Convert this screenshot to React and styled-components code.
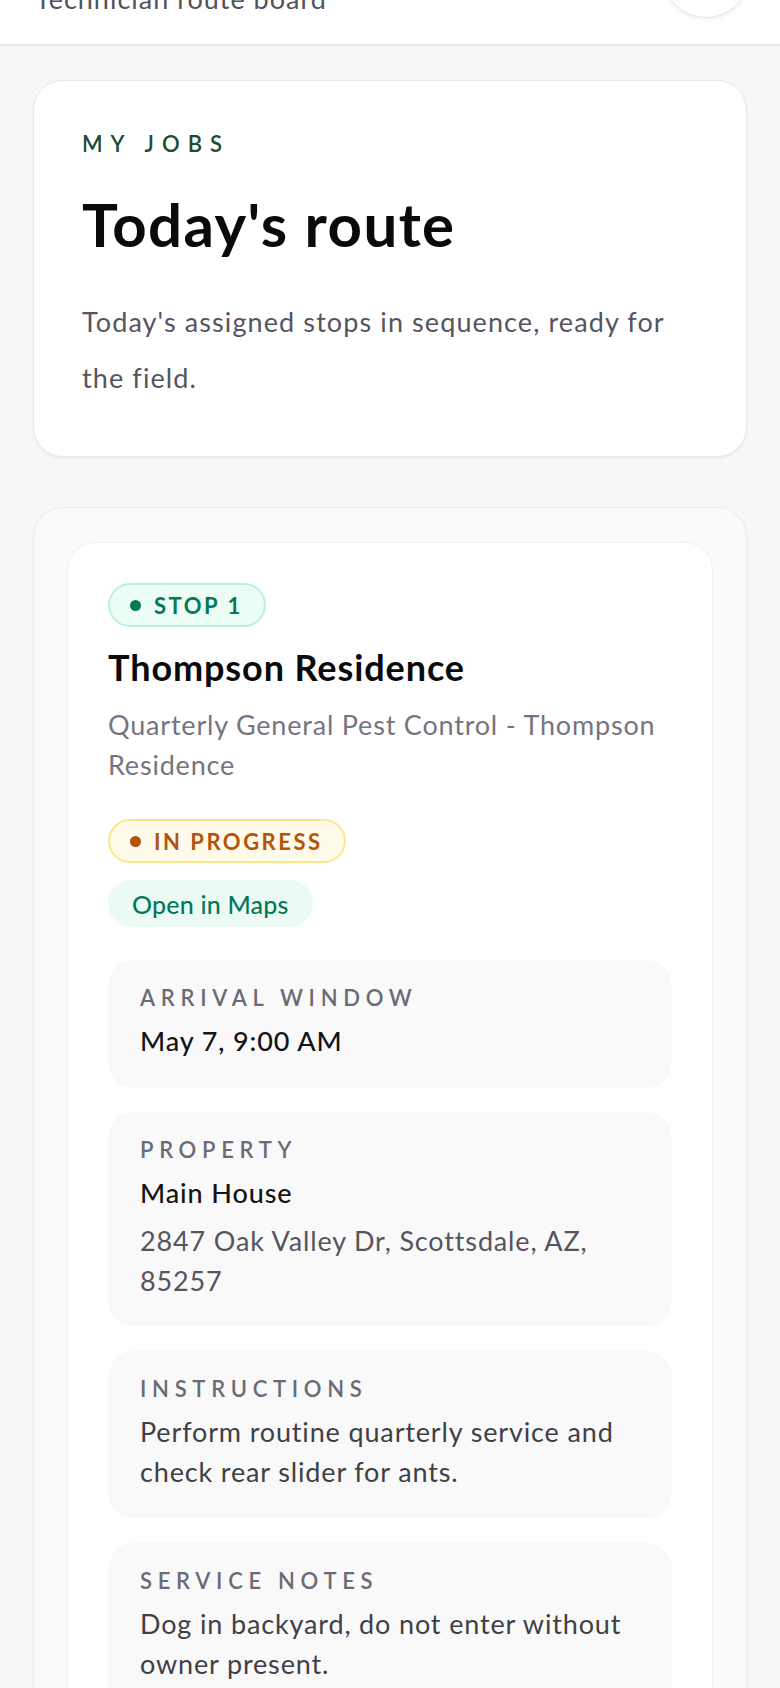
import React from "react";
import styled, { createGlobalStyle } from "styled-components";

const GlobalStyle = createGlobalStyle`
  * { box-sizing: border-box; }
  html, body { margin: 0; padding: 0; }
  body {
    background: #f6f7f9;
    font-family: Lato, "Noto Sans", "Liberation Sans", sans-serif;
    color: #18181b;
    -webkit-font-smoothing: antialiased;
  }
`;

const Page = styled.div`
  min-height: 1688px;
  background: #f6f7f9;
`;

/* the page is photographed scrolled down: the header sits partly above the fold */
const Header = styled.header`
  margin-top: -90px;
  background: #ffffff;
  border-bottom: 2px solid #e6e7ea;
  padding: 20px 30px 26px 35px;
  display: flex;
  justify-content: space-between;
  align-items: flex-end;
`;

const HeaderSub = styled.p`
  margin: 0 0 4px;
  font-size: 27px;
  line-height: 30px;
  letter-spacing: 1px;
  color: #52525b;
`;

const CircleButton = styled.button`
  width: 88px;
  height: 88px;
  border-radius: 50%;
  border: 1.5px solid #e4e6e8;
  background: #ffffff;
  box-shadow: 0 2px 4px rgba(0, 0, 0, 0.06);
  padding: 0;
`;

const Main = styled.main`
  padding: 34px 33px 40px;
  display: flex;
  flex-direction: column;
  gap: 50px;
`;

const HeroCard = styled.section`
  background: #ffffff;
  border: 1px solid #e8e9ec;
  border-radius: 30px;
  padding: 50px 48px 50px;
  box-shadow: 0 2px 3px rgba(0, 0, 0, 0.05);
`;

const Eyebrow = styled.div`
  font-size: 22px;
  line-height: 26px;
  font-weight: 600;
  letter-spacing: 8px;
  color: #1b4d36;
  text-transform: uppercase;
`;

const Title = styled.h1`
  margin: 31px 0 0;
  font-size: 60px;
  line-height: 72px;
  font-weight: 700;
  color: #0a0a0a;
  letter-spacing: 1.4px;
`;

const Lead = styled.p`
  margin: 34px 0 0;
  font-size: 27px;
  line-height: 56px;
  letter-spacing: 1.1px;
  color: #55555f;
`;

const ListShell = styled.section`
  background: #fafafa;
  border: 1px solid #ececee;
  border-radius: 30px;
  padding: 34px 33px;
  box-shadow: 0 2px 3px rgba(0, 0, 0, 0.04);
`;

const StopCard = styled.article`
  background: #ffffff;
  border: 1px solid #efeff1;
  border-radius: 28px;
  padding: 40px;
  display: flex;
  flex-direction: column;
  align-items: flex-start;
`;

const tones = {
  green: { bg: "#ecfdf5", border: "#bdf0d6", fg: "#047857" },
  amber: { bg: "#fffbeb", border: "#fde68a", fg: "#b45309" },
};

const Pill = styled.span`
  display: inline-flex;
  align-items: center;
  gap: 13px;
  height: 44px;
  padding: 0 21px 0 20px;
  border-radius: 999px;
  border: 2px solid ${(p) => tones[p.$tone].border};
  background: ${(p) => tones[p.$tone].bg};
  color: ${(p) => tones[p.$tone].fg};
  font-size: 22px;
  font-weight: 700;
  letter-spacing: 2.5px;
  text-transform: uppercase;
  margin-top: ${(p) => p.$mt || 0}px;
`;

const Dot = styled.span`
  width: 11px;
  height: 11px;
  border-radius: 50%;
  background: currentColor;
  flex: none;
`;

const StopTitle = styled.h2`
  margin: 18px 0 0;
  font-size: 36px;
  line-height: 45px;
  font-weight: 700;
  letter-spacing: 0.9px;
  color: #0a0a0a;
`;

const StopSub = styled.p`
  margin: 15px 0 0;
  font-size: 27px;
  line-height: 40px;
  letter-spacing: 0.8px;
  color: #75757f;
`;

const MapsButton = styled.a`
  display: inline-flex;
  align-items: center;
  height: 47px;
  margin-top: 17px;
  padding: 0 24px;
  border-radius: 999px;
  background: #ebfbf3;
  color: #047857;
  font-size: 25px;
  font-weight: 500;
  letter-spacing: 0.2px;
  text-decoration: none;
`;

const InfoStack = styled.div`
  align-self: stretch;
  margin-top: 33px;
  display: flex;
  flex-direction: column;
  gap: 24px;
`;

const InfoBox = styled.div`
  background: #f9f9fa;
  border-radius: 26px;
  padding: 22px 32px 26.6px;
`;

const InfoLabel = styled.div`
  font-size: 22px;
  line-height: 32px;
  font-weight: 600;
  letter-spacing: 5.7px;
  color: #6b6b76;
  text-transform: uppercase;
`;

const InfoValue = styled.div`
  margin-top: 7px;
  font-size: 27px;
  line-height: 40px;
  font-weight: 500;
  letter-spacing: 0.9px;
  color: #141416;
`;

const InfoText = styled.div`
  margin-top: ${(p) => (p.$after ? 8 : 7)}px;
  font-size: 27px;
  line-height: 40px;
  letter-spacing: 0.85px;
  color: ${(p) => (p.$muted ? "#55555e" : "#3f3f46")};
`;

const stop = {
  n: 1,
  name: "Thompson Residence",
  service: "Quarterly General Pest Control - Thompson Residence",
  status: "In progress",
  arrival: "May 7, 9:00 AM",
  property: "Main House",
  address: "2847 Oak Valley Dr, Scottsdale, AZ, 85257",
  instructions: "Perform routine quarterly service and check rear slider for ants.",
  notes: "Dog in backyard, do not enter without owner present.",
};

export default function App() {
  return (
    <Page>
      <GlobalStyle />
      <Header>
        <HeaderSub>Technician route board</HeaderSub>
        <CircleButton aria-label="Account" />
      </Header>
      <Main>
        <HeroCard>
          <Eyebrow>My jobs</Eyebrow>
          <Title>Today's route</Title>
          <Lead>Today's assigned stops in sequence, ready for the field.</Lead>
        </HeroCard>
        <ListShell>
          <StopCard>
            <Pill $tone="green">
              <Dot />
              Stop {stop.n}
            </Pill>
            <StopTitle>{stop.name}</StopTitle>
            <StopSub>{stop.service}</StopSub>
            <Pill $tone="amber" $mt={34}>
              <Dot />
              {stop.status}
            </Pill>
            <MapsButton href="#">Open in Maps</MapsButton>
            <InfoStack>
              <InfoBox>
                <InfoLabel>Arrival window</InfoLabel>
                <InfoValue>{stop.arrival}</InfoValue>
              </InfoBox>
              <InfoBox>
                <InfoLabel>Property</InfoLabel>
                <InfoValue>{stop.property}</InfoValue>
                <InfoText $muted $after>
                  {stop.address}
                </InfoText>
              </InfoBox>
              <InfoBox>
                <InfoLabel>Instructions</InfoLabel>
                <InfoText>{stop.instructions}</InfoText>
              </InfoBox>
              <InfoBox>
                <InfoLabel>Service notes</InfoLabel>
                <InfoText>{stop.notes}</InfoText>
              </InfoBox>
            </InfoStack>
          </StopCard>
        </ListShell>
      </Main>
    </Page>
  );
}
